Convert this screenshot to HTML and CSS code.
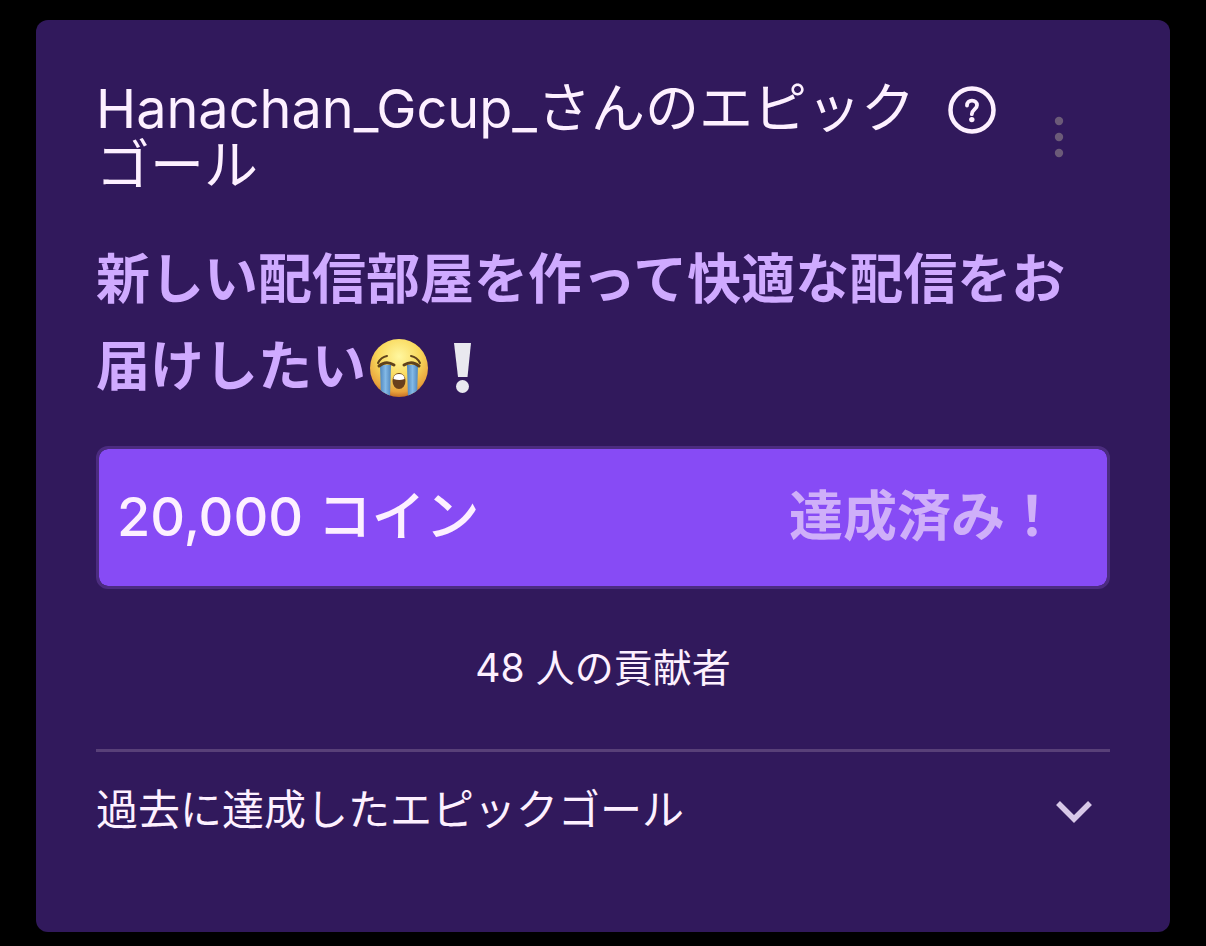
FILE: index.html
```html
<!DOCTYPE html>
<html lang="ja">
<head>
    <meta charset="UTF-8">
    <meta name="viewport" content="width=device-width, initial-scale=1">
    <title>エピックゴール</title>
    <link rel="stylesheet" href="styles.css">
</head>
<body>
    <main class="card">
        <header class="card-header">
            <h1 class="title">Hanachan_Gcup_さんのエピックゴール</h1>
            <button type="button" class="help" aria-label="ヘルプ">
                <svg width="48" height="48" viewBox="0 0 48 48" fill="none" stroke="currentColor">
                    <circle cx="24" cy="24" r="21.500" stroke-width="4.500"/>
                    <path d="M19 19.500c0-3 2-4.800 5-4.800s5 1.800 5 4.500c0 4.200-5.200 4.300-5.200 9" stroke-width="3.800" stroke-linecap="round"/>
                    <circle cx="23.800" cy="33.600" r="2.700" fill="currentColor" stroke="none"/>
                </svg>
            </button>
            <button type="button" class="menu" aria-label="メニュー">
                <svg width="10" height="42" viewBox="0 0 10 42" fill="currentColor">
                    <circle cx="5" cy="5" r="4.200"/>
                    <circle cx="5" cy="21" r="4.200"/>
                    <circle cx="5" cy="37" r="4.200"/>
                </svg>
            </button>
        </header>

        <h2 class="goal">新しい配信部屋を作って快適な配信をお届けしたい<svg class="emoji" viewBox="0 0 60 60" role="img" aria-label="大泣き">
                <defs>
                    <radialGradient id="face" cx="50%" cy="30%" r="72%">
                        <stop offset="0" stop-color="#fff7a0"/>
                        <stop offset="0.500" stop-color="#f9d95c"/>
                        <stop offset="0.850" stop-color="#e9a23c"/>
                        <stop offset="1" stop-color="#c0641f"/>
                    </radialGradient>
                    <linearGradient id="tear" x1="0" y1="0" x2="1" y2="0">
                        <stop offset="0" stop-color="#4f86bd"/>
                        <stop offset="0.500" stop-color="#83b9e6"/>
                        <stop offset="1" stop-color="#4f86bd"/>
                    </linearGradient>
                    <clipPath id="face-clip"><circle cx="30" cy="30" r="29"/></clipPath>
                </defs>
                <circle cx="30" cy="30" r="29" fill="url(#face)"/>
                <g clip-path="url(#face-clip)" fill="url(#tear)">
                    <path d="M11 27h11l-1 33h-9z"/>
                    <path d="M38 27h11l-1 33h-9z"/>
                </g>
                <g fill="none" stroke="#5f421c" stroke-linecap="round">
                    <path d="M9 25q3-6 9-7M42 18q6 1 9 7" stroke-width="2"/>
                    <path d="M10 28q7-6 15-1M35 27q8-5 15 1" stroke-width="3"/>
                </g>
                <ellipse cx="30" cy="43" rx="6.500" ry="8" fill="#69401c"/>
                <path d="M24.500 41q0-5 5.500-5t5.500 5q-5 2-11 0z" fill="#fff"/>
            </svg><svg class="emoji" viewBox="0 0 60 60" role="img" aria-label="感嘆符">
                <path d="M19 5h17l-3.500 34h-9.500z" fill="#e9e9ef"/>
                <circle cx="27.500" cy="48.500" r="6.500" fill="#e9e9ef"/>
            </svg></h2>

        <div class="progress">
            <span class="coins">20,000 コイン</span>
            <strong class="done">達成済み！</strong>
        </div>

        <p class="contributors">48 人の貢献者</p>

        <button type="button" class="history" aria-expanded="false">
            <span>過去に達成したエピックゴール</span>
            <svg width="36" height="24" viewBox="0 0 36 24" fill="none" stroke="currentColor" stroke-width="5.500">
                <path d="M2 3l16 16L34 3"/>
            </svg>
        </button>
    </main>
</body>
</html>
```

FILE: styles.css
```css
* {
    box-sizing: border-box;
}

body {
    margin: 0;
    padding: 20px 36px 14px;
    background: #000;
    color: #fdf0ff;
    font-family: Inter, "Noto Sans CJK JP", sans-serif;
}

h1, h2, p {
    margin: 0;
}

button {
    padding: 0;
    border: none;
    background: none;
    color: inherit;
    font: inherit;
    cursor: pointer;
}

svg {
    display: block;
}

.card {
    padding: 60px;
    border-radius: 12px;
    background: #31195c;
}

.card-header {
    display: flex;
    align-items: flex-start;
    padding-right: 46px;
}

.title {
    flex: 1;
    font-size: 54px;
    font-weight: 400;
    line-height: 57px;
}

.help {
    margin: 6px 58px 0 24px;
}

.menu {
    margin-top: 36px;
    color: #6b5a78;
}

.goal {
    margin-top: 42px;
    color: #cfaaff;
    font-size: 54px;
    font-weight: 700;
    line-height: 87px;
}

.emoji {
    display: inline-block;
    width: 60px;
    height: 60px;
    margin: 0 3px;
    vertical-align: -12px;
}

.progress {
    display: flex;
    justify-content: space-between;
    align-items: center;
    height: 143px;
    margin-top: 36px;
    padding: 0 48px 10px 18px;
    border: 3px solid #4c2c80;
    border-radius: 12px;
    background: #874bf5;
    background-clip: padding-box;
    font-size: 54px;
}

.coins {
    font-weight: 500;
}

.done {
    color: #cfaff9;
    font-weight: 700;
}

.contributors {
    margin-top: 50px;
    font-size: 39px;
    line-height: 57px;
    text-align: center;
}

.history {
    display: flex;
    justify-content: space-between;
    align-items: flex-start;
    width: 100%;
    height: 123px;
    margin-top: 53px;
    padding: 28px 18px 0 0;
    border-top: 3px solid #584078;
    font-size: 42px;
    line-height: 60px;
    text-align: left;
}

.history svg {
    margin-top: 20px;
    color: #d8c8e8;
}
```
